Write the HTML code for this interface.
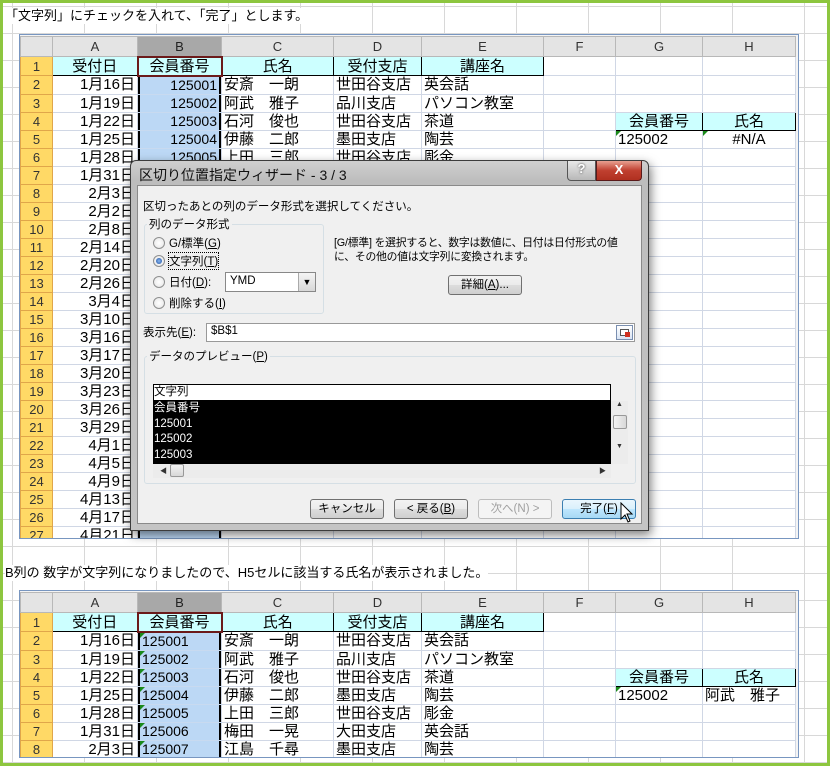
<!DOCTYPE html>
<html><head><meta charset="utf-8">
<style>
*{box-sizing:border-box;margin:0;padding:0}
body{width:830px;height:766px;overflow:hidden;position:relative;background:#fff;font-family:"Liberation Sans","Noto Sans CJK JP",sans-serif}
.page{position:absolute;left:0;top:0;width:830px;height:766px;border:3px solid #8dc63f;
background-color:#fff;
background-image:linear-gradient(90deg,#d8d8d8 1px,transparent 1px),linear-gradient(#d8d8d8 1px,transparent 1px);
background-size:72px 100%,100% 27px;background-position:9px 0,0 3px}
.cap{position:absolute;left:5px;font-size:13px;color:#000;background:#fff;white-space:nowrap;line-height:16px}
.frame{position:absolute;left:19px;width:780px;border:1px solid #7896c0;background:#f4f4f4;overflow:hidden}
table{position:absolute;left:0;top:1px;border-collapse:collapse;table-layout:fixed;background:#fff}
td{height:18px;border:1px solid #d0d7e5;padding:0 2px;font-size:15px;line-height:17px;white-space:nowrap;overflow:hidden;color:#000}
tr.h td{height:20px;background:#e4e4e4;border-color:#b8b8b8;text-align:center;color:#333;font-size:13px;font-family:"Liberation Sans",sans-serif}
tr.h td.sel{background:#a8a8a8;color:#222}
td.r{background:#ffd966;border-color:#e0a64a;text-align:center;color:#333;font-size:13px;font-family:"Liberation Sans",sans-serif}
td.hd{background:#ccffff;border:1px solid #000;text-align:center}
td.a{text-align:right}
td.b,td.bt{background:#bcd8f5;box-shadow:inset 2px 0 0 #000,inset -2px 0 0 #000;border-top-color:#c8daf0;border-bottom-color:#c8daf0;font-size:14px;padding-right:4px}
td.bt{position:relative;padding-left:4px}
td.bt:before,.tri:before{content:"";position:absolute;left:0;top:0;border-top:5px solid #1a8a1a;border-right:5px solid transparent}
td.bt:before{left:2px}
td.b1{border:2px solid #6b1a1a;background:#ccffff;text-align:center}
.tri{position:relative}
.dlg{position:absolute;left:130px;top:160px;width:519px;height:371px;border:1px solid #3c3c3c;border-radius:6px 6px 0 0;
background:linear-gradient(#cfcfcf,#bdbdbd 20px,#c4c4c4);box-shadow:2px 4px 10px rgba(0,0,0,.5);font-size:11.5px;font-family:"Liberation Sans","Noto Sans CJK JP",sans-serif;color:#000}
.dlg .tt{position:absolute;left:8px;top:4px;font-size:14px;color:#111}
.qb{position:absolute;left:436px;top:0;width:29px;height:20px;border:1px solid #555;border-top:none;border-radius:0 0 0 4px;background:linear-gradient(#e8e8e8,#b8b8b8);text-align:center;font-size:13px;color:#fff;font-weight:bold;text-shadow:0 0 2px #333}
.xb{position:absolute;left:465px;top:0;width:46px;height:20px;border:1px solid #5a1a1a;border-top:none;border-radius:0 0 4px 0;background:linear-gradient(#e8a090,#c04030 50%,#b03020);text-align:center;color:#fff;font-weight:bold;font-size:13px;line-height:18px}
.bd{position:absolute;left:6px;top:24px;width:505px;height:339px;background:#f0f0f0;border:1px solid #8a8a8a}
.ab{position:absolute;white-space:nowrap}
.grp{position:absolute;border:1px solid #d5dfe5;border-radius:3px}
.lg{position:absolute;background:#f0f0f0;padding:0 2px;white-space:nowrap}
.rd{position:absolute;width:12px;height:12px;border-radius:50%;border:1px solid #8e8f8f;background:radial-gradient(#fff,#e4e4e4)}
.rd.on:after{content:"";position:absolute;left:2px;top:2px;width:6px;height:6px;border-radius:50%;background:radial-gradient(#8ab8f0,#1d4fa0)}
.btn{position:absolute;height:20px;border:1px solid #707070;border-radius:3px;background:linear-gradient(#f2f2f2,#ebebeb 50%,#dddddd 51%,#cfcfcf);text-align:center;line-height:18px;white-space:nowrap}
u{text-decoration:underline}
</style></head><body>
<div class="page"></div>
<div class="cap" style="top:8px">「文字列」にチェックを入れて、「完了」とします。</div>

<div class="frame" style="top:34px;height:505px">
<table>
<colgroup><col style="width:32px"><col style="width:85px"><col style="width:84px"><col style="width:112px"><col style="width:88px"><col style="width:122px"><col style="width:72px"><col style="width:87px"><col style="width:93px"></colgroup>
<tr class="h"><td></td><td>A</td><td class="sel">B</td><td>C</td><td>D</td><td>E</td><td>F</td><td>G</td><td>H</td></tr>
<tr><td class="r">1</td><td class="hd">受付日</td><td class="b1">会員番号</td><td class="hd">氏名</td><td class="hd">受付支店</td><td class="hd">講座名</td><td></td><td></td><td></td></tr>
<tr><td class="r">2</td><td class="a">1月16日</td><td class="b a">125001</td><td>安斎　一朗</td><td>世田谷支店</td><td>英会話</td><td></td><td></td><td></td></tr>
<tr><td class="r">3</td><td class="a">1月19日</td><td class="b a">125002</td><td>阿武　雅子</td><td>品川支店</td><td>パソコン教室</td><td></td><td></td><td></td></tr>
<tr><td class="r">4</td><td class="a">1月22日</td><td class="b a">125003</td><td>石河　俊也</td><td>世田谷支店</td><td>茶道</td><td></td><td class="hd">会員番号</td><td class="hd">氏名</td></tr>
<tr><td class="r">5</td><td class="a">1月25日</td><td class="b a">125004</td><td>伊藤　二郎</td><td>墨田支店</td><td>陶芸</td><td></td><td class="tri">125002</td><td class="tri" style="text-align:center">#N/A</td></tr>
<tr><td class="r">6</td><td class="a">1月28日</td><td class="b a">125005</td><td>上田　三郎</td><td>世田谷支店</td><td>彫金</td><td></td><td></td><td></td></tr>
<tr><td class="r">7</td><td class="a">1月31日</td><td class="b a">125006</td><td></td><td></td><td></td><td></td><td></td><td></td></tr>
<tr><td class="r">8</td><td class="a">2月3日</td><td class="b"></td><td></td><td></td><td></td><td></td><td></td><td></td></tr>
<tr><td class="r">9</td><td class="a">2月2日</td><td class="b"></td><td></td><td></td><td></td><td></td><td></td><td></td></tr>
<tr><td class="r">10</td><td class="a">2月8日</td><td class="b"></td><td></td><td></td><td></td><td></td><td></td><td></td></tr>
<tr><td class="r">11</td><td class="a">2月14日</td><td class="b"></td><td></td><td></td><td></td><td></td><td></td><td></td></tr>
<tr><td class="r">12</td><td class="a">2月20日</td><td class="b"></td><td></td><td></td><td></td><td></td><td></td><td></td></tr>
<tr><td class="r">13</td><td class="a">2月26日</td><td class="b"></td><td></td><td></td><td></td><td></td><td></td><td></td></tr>
<tr><td class="r">14</td><td class="a">3月4日</td><td class="b"></td><td></td><td></td><td></td><td></td><td></td><td></td></tr>
<tr><td class="r">15</td><td class="a">3月10日</td><td class="b"></td><td></td><td></td><td></td><td></td><td></td><td></td></tr>
<tr><td class="r">16</td><td class="a">3月16日</td><td class="b"></td><td></td><td></td><td></td><td></td><td></td><td></td></tr>
<tr><td class="r">17</td><td class="a">3月17日</td><td class="b"></td><td></td><td></td><td></td><td></td><td></td><td></td></tr>
<tr><td class="r">18</td><td class="a">3月20日</td><td class="b"></td><td></td><td></td><td></td><td></td><td></td><td></td></tr>
<tr><td class="r">19</td><td class="a">3月23日</td><td class="b"></td><td></td><td></td><td></td><td></td><td></td><td></td></tr>
<tr><td class="r">20</td><td class="a">3月26日</td><td class="b"></td><td></td><td></td><td></td><td></td><td></td><td></td></tr>
<tr><td class="r">21</td><td class="a">3月29日</td><td class="b"></td><td></td><td></td><td></td><td></td><td></td><td></td></tr>
<tr><td class="r">22</td><td class="a">4月1日</td><td class="b"></td><td></td><td></td><td></td><td></td><td></td><td></td></tr>
<tr><td class="r">23</td><td class="a">4月5日</td><td class="b"></td><td></td><td></td><td></td><td></td><td></td><td></td></tr>
<tr><td class="r">24</td><td class="a">4月9日</td><td class="b"></td><td></td><td></td><td></td><td></td><td></td><td></td></tr>
<tr><td class="r">25</td><td class="a">4月13日</td><td class="b"></td><td></td><td></td><td></td><td></td><td></td><td></td></tr>
<tr><td class="r">26</td><td class="a">4月17日</td><td class="b"></td><td></td><td></td><td></td><td></td><td></td><td></td></tr>
<tr><td class="r">27</td><td class="a">4月21日</td><td class="b"></td><td></td><td></td><td></td><td></td><td></td><td></td></tr>
</table>
</div>

<div class="dlg">
<div class="tt">区切り位置指定ウィザード - 3 / 3</div>
<div class="qb">?</div><div class="xb">X</div>
<div class="bd">
<div class="ab" style="left:5px;top:12px">区切ったあとの列のデータ形式を選択してください。</div>
<div class="grp" style="left:6px;top:38px;width:180px;height:90px"></div>
<div class="lg" style="left:9px;top:30px">列のデータ形式</div>
<div class="rd" style="left:15px;top:51px"></div><div class="ab" style="left:31px;top:49px">G/標準(<u>G</u>)</div>
<div class="rd on" style="left:15px;top:69px"></div><div class="ab" style="left:31px;top:67px;outline:1px dotted #000">文字列(<u>T</u>)</div>
<div class="rd" style="left:15px;top:90px"></div><div class="ab" style="left:31px;top:88px">日付(<u>D</u>):</div>
<div class="ab" style="left:87px;top:86px;width:91px;height:20px;border:1px solid #888;background:#fff;padding:2px 4px">YMD
<div style="position:absolute;right:0;top:0;width:17px;height:18px;background:linear-gradient(#f4f4f4,#d8d8d8);border-left:1px solid #aaa;font-size:9px;text-align:center;line-height:18px">▼</div></div>
<div class="rd" style="left:15px;top:111px"></div><div class="ab" style="left:31px;top:109px">削除する(<u>I</u>)</div>
<div class="ab" style="left:196px;top:50px;line-height:14px;font-size:10.8px;letter-spacing:-0.2px">[G/標準] を選択すると、数字は数値に、日付は日付形式の値<br>に、その他の値は文字列に変換されます。</div>
<div class="btn" style="left:310px;top:89px;width:74px">詳細(<u>A</u>)...</div>
<div class="ab" style="left:5px;top:138px">表示先(<u>E</u>):</div>
<div class="ab" style="left:68px;top:137px;width:429px;height:19px;border:1px solid #999;background:#fff;padding:1px 4px">$B$1
<div style="position:absolute;right:1px;top:1px;width:17px;height:15px;border:1px solid #7a8fb0;background:linear-gradient(#fff,#d8e4f4)"><div style="position:absolute;left:3px;top:3px;width:9px;height:7px;border:1px solid #555;background:#fff"></div><div style="position:absolute;left:8px;top:6px;width:5px;height:5px;background:#d03020"></div></div></div>
<div class="grp" style="left:6px;top:170px;width:492px;height:128px"></div>
<div class="lg" style="left:9px;top:162px">データのプレビュー(<u>P</u>)</div>
<div class="ab" style="left:15px;top:198px;width:458px;height:17px;border:1px solid #000;background:#fff;line-height:15px">文字列</div>
<div class="ab" style="left:15px;top:215px;width:458px;height:63px;background:#000;color:#fff;line-height:15.5px;padding-left:1px">会員番号<br>125001<br>125002<br>125003</div>
<div class="ab" style="left:473px;top:215px;width:17px;height:63px;background:#ececec;font-size:7px;text-align:center;color:#333">▲<div style="margin:7px auto 0;width:14px;height:14px;border:1px solid #999;border-radius:2px;background:linear-gradient(90deg,#f4f4f4,#d8d8d8)"></div><div style="margin-top:14px">▼</div></div>
<div class="ab" style="left:15px;top:278px;width:458px;height:14px;background:#ececec;font-size:7px;color:#333">
<span style="position:absolute;left:7px;top:2px">◀</span><div style="position:absolute;left:17px;top:0;width:14px;height:13px;border:1px solid #999;border-radius:2px;background:linear-gradient(#f4f4f4,#d8d8d8)"></div><span style="position:absolute;right:5px;top:2px">▶</span></div>
<div class="btn" style="left:172px;top:313px;width:74px">キャンセル</div>
<div class="btn" style="left:256px;top:313px;width:74px">&lt; 戻る(<u>B</u>)</div>
<div class="btn" style="left:340px;top:313px;width:74px;color:#a0a0a0;border-color:#bdbdbd;background:#f4f4f4">次へ(N) &gt;</div>
<div class="btn" style="left:424px;top:313px;width:74px;border-color:#3c7fb1;background:linear-gradient(#eaf6fd,#d9f0fc 50%,#bee6fd 51%,#a7d9f5)">完了(<u>F</u>)</div>
</div>
<svg style="position:absolute;left:489px;top:341px" width="14" height="22" viewBox="0 0 14 22"><path d="M1 1 L1 17 L5 13 L8 20 L10 19 L7 12 L12 12 Z" fill="#fff" stroke="#000" stroke-width="1"/></svg>
</div>

<div class="cap" style="top:565px">B列の 数字が文字列になりましたので、H5セルに該当する氏名が表示されました。</div>

<div class="frame" style="top:590px;height:168px">
<table>
<colgroup><col style="width:32px"><col style="width:85px"><col style="width:84px"><col style="width:112px"><col style="width:88px"><col style="width:122px"><col style="width:72px"><col style="width:87px"><col style="width:93px"></colgroup>
<tr class="h"><td></td><td>A</td><td class="sel">B</td><td>C</td><td>D</td><td>E</td><td>F</td><td>G</td><td>H</td></tr>
<tr><td class="r">1</td><td class="hd">受付日</td><td class="b1">会員番号</td><td class="hd">氏名</td><td class="hd">受付支店</td><td class="hd">講座名</td><td></td><td></td><td></td></tr>
<tr><td class="r">2</td><td class="a">1月16日</td><td class="bt">125001</td><td>安斎　一朗</td><td>世田谷支店</td><td>英会話</td><td></td><td></td><td></td></tr>
<tr><td class="r">3</td><td class="a">1月19日</td><td class="bt">125002</td><td>阿武　雅子</td><td>品川支店</td><td>パソコン教室</td><td></td><td></td><td></td></tr>
<tr><td class="r">4</td><td class="a">1月22日</td><td class="bt">125003</td><td>石河　俊也</td><td>世田谷支店</td><td>茶道</td><td></td><td class="hd">会員番号</td><td class="hd">氏名</td></tr>
<tr><td class="r">5</td><td class="a">1月25日</td><td class="bt">125004</td><td>伊藤　二郎</td><td>墨田支店</td><td>陶芸</td><td></td><td class="tri">125002</td><td>阿武　雅子</td></tr>
<tr><td class="r">6</td><td class="a">1月28日</td><td class="bt">125005</td><td>上田　三郎</td><td>世田谷支店</td><td>彫金</td><td></td><td></td><td></td></tr>
<tr><td class="r">7</td><td class="a">1月31日</td><td class="bt">125006</td><td>梅田　一晃</td><td>大田支店</td><td>英会話</td><td></td><td></td><td></td></tr>
<tr><td class="r">8</td><td class="a">2月3日</td><td class="bt">125007</td><td>江島　千尋</td><td>墨田支店</td><td>陶芸</td><td></td><td></td><td></td></tr>
</table>
</div>
</body></html>
